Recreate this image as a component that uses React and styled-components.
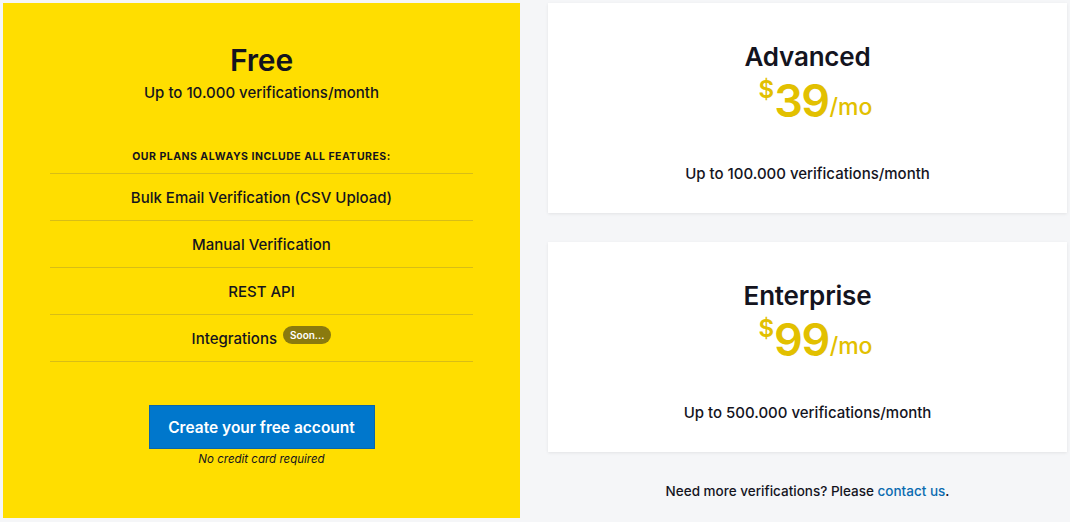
import React from "react"
import styled, { createGlobalStyle } from "styled-components"

const GlobalStyle = createGlobalStyle`
  html, body {
    margin: 0;
    padding: 0;
    background: #f5f6f8;
    font-family: "Inter", "Noto Sans", sans-serif;
    color: #14141e;
  }
`

const Page = styled.div`
  display: flex;
  gap: 28px;
  padding: 3px 3px 0 3px;
  width: 1070px;
  box-sizing: border-box;
`

const FreeCard = styled.section`
  width: 517px;
  height: 515px;
  box-sizing: border-box;
  background: #ffde00;
  padding: 37px 47px 0;
  display: flex;
  flex-direction: column;
  align-items: center;
  text-align: center;
`

const PlanName = styled.h2`
  margin: 0;
  font-size: ${(p) => p.size || 30}px;
  line-height: 40px;
  font-weight: 600;
  letter-spacing: -0.2px;
`

const Quota = styled.p`
  margin: ${(p) => p.top || 0}px 0 0;
  font-size: 15px;
  line-height: 20px;
  font-weight: 500;
`

const Included = styled.div`
  margin-top: 46px;
  margin-bottom: 8px;
  font-size: 10.5px;
  line-height: 16px;
  font-weight: 700;
  letter-spacing: 0.5px;
  text-transform: uppercase;
`

const Features = styled.ul`
  list-style: none;
  margin: 0;
  padding: 0;
  width: 100%;
  border-bottom: 1px solid #d8bd16;
`

const Feature = styled.li`
  height: 46px;
  border-top: 1px solid #d8bd16;
  display: flex;
  align-items: center;
  justify-content: center;
  gap: 6px;
  font-size: 15px;
  font-weight: 500;
`

const Badge = styled.span`
  background: #8a7a0e;
  color: #fff;
  font-size: 10px;
  font-weight: 600;
  line-height: 16px;
  padding: 1px 7px;
  border-radius: 10px;
  margin-top: -6px;
`

const CreateButton = styled.a`
  margin-top: 43px;
  width: 226px;
  height: 44px;
  box-sizing: border-box;
  background: #0077cc;
  border: 1px solid #0a66aa;
  color: #fff;
  font-size: 15.5px;
  font-weight: 600;
  display: flex;
  align-items: center;
  justify-content: center;
  text-decoration: none;
`

const Note = styled.p`
  margin: 2px 0 0;
  font-size: 11.5px;
  font-style: italic;
  line-height: 16px;
`

const Column = styled.div`
  width: 519px;
  display: flex;
  flex-direction: column;
  gap: 29px;
`

const PaidCard = styled.section`
  height: 210px;
  box-sizing: border-box;
  background: #fff;
  box-shadow: 0 1px 3px rgba(0, 0, 0, 0.08);
  padding-top: 34px;
  display: flex;
  flex-direction: column;
  align-items: center;
`

const Price = styled.div`
  display: flex;
  align-items: flex-start;
  color: #e2c000;
  font-weight: 600;
  margin: -2px 0 0 16px;
  height: 52px;
`

const Currency = styled.span`
  font-size: 24px;
  line-height: 30px;
`

const Amount = styled.span`
  font-size: 45px;
  line-height: 52px;
  letter-spacing: -1.5px;
`

const Per = styled.span`
  font-size: 23px;
  line-height: 28px;
  font-weight: 500;
  align-self: flex-end;
  margin: 0 0 6px 1px;
`

const Footer = styled.p`
  margin: 0;
  text-align: center;
  font-size: 13.5px;
  font-weight: 500;
  line-height: 20px;

  a {
    color: #0a6bb0;
    text-decoration: none;
  }
`

const plans = [
  { name: "Advanced", price: 39, quota: "Up to 100.000 verifications/month" },
  { name: "Enterprise", price: 99, quota: "Up to 500.000 verifications/month" },
]

const App = () => (
  <>
    <GlobalStyle />
    <Page>
      <FreeCard>
        <PlanName>Free</PlanName>
        <Quota top={3}>Up to 10.000 verifications/month</Quota>
        <Included>Our plans always include all features:</Included>
        <Features>
          <Feature>Bulk Email Verification (CSV Upload)</Feature>
          <Feature>Manual Verification</Feature>
          <Feature>REST API</Feature>
          <Feature>
            Integrations <Badge>Soon...</Badge>
          </Feature>
        </Features>
        <CreateButton href="#">Create your free account</CreateButton>
        <Note>No credit card required</Note>
      </FreeCard>
      <Column>
        {plans.map((plan) => (
          <PaidCard key={plan.name}>
            <PlanName size={26}>{plan.name}</PlanName>
            <Price>
              <Currency>$</Currency>
              <Amount>{plan.price}</Amount>
              <Per>/mo</Per>
            </Price>
            <Quota top={37}>{plan.quota}</Quota>
          </PaidCard>
        ))}
        <Footer>
          Need more verifications? Please <a href="#">contact us</a>.
        </Footer>
      </Column>
    </Page>
  </>
)

export default App
